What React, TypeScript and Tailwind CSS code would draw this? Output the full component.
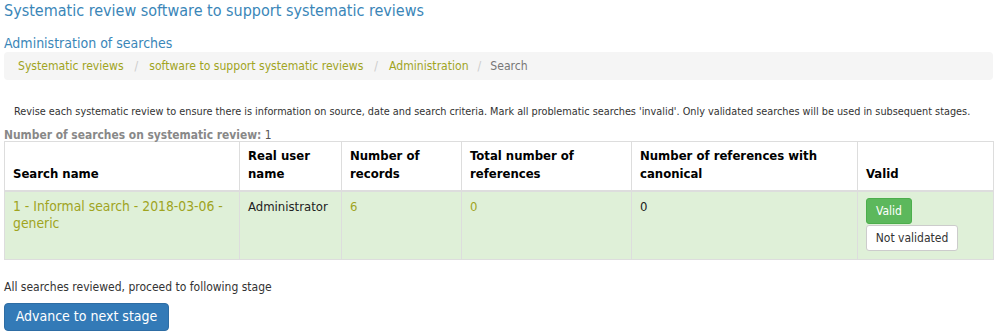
import React from "react";

const font = { fontFamily: '"DejaVu Sans Condensed", "Liberation Sans", sans-serif' };

export default function App() {
  const th = "border border-[#dddddd] border-b-2 align-bottom px-[8px] pb-[7px] text-left text-[13px] leading-[18px] font-bold text-black";
  const td = "border border-[#dddddd] align-top px-[8px] pt-[6px] text-[13px] leading-[17px]";
  return (
    <div className="bg-white w-[1000px] h-[335px] px-[4px] overflow-hidden" style={font}>
      <h1 className="text-[16px] leading-[22px] text-[#3a86b8] font-normal">
        Systematic review software to support systematic reviews
      </h1>
      <h2 className="mt-[12px] text-[14px] leading-[18px] text-[#3a86b8] font-normal">
        Administration of searches
      </h2>
      <div className="w-[989px] h-[28px] bg-[#f5f5f5] rounded-[4px] pl-[14px] flex items-center text-[12.1px]">
        <span className="text-[#a0a41e]">Systematic reviews</span>
        <span className="text-[#cccccc] px-[11px]">/</span>
        <span className="text-[#a0a41e]">software to support systematic reviews</span>
        <span className="text-[#cccccc] px-[11px]">/</span>
        <span className="text-[#a0a41e]">Administration</span>
        <span className="text-[#cccccc] px-[9px]">/</span>
        <span className="text-[#777777]">Search</span>
      </div>
      <p className="mt-[23px] pl-[10px] text-[10.8px] leading-[18px] text-[#333333] whitespace-nowrap">
        Revise each systematic review to ensure there is information on source, date and search criteria. Mark all problematic searches 'invalid'. Only validated searches will be used in subsequent stages.
      </p>
      <p className="mt-[8px] text-[11.9px] leading-[12px] text-[#888888]">
        <span className="font-bold">Number of searches on systematic review:</span>{" "}
        <span className="text-[#555555]">1</span>
      </p>
      <table className="border-collapse w-[989px] table-fixed">
        <colgroup>
          <col className="w-[235px]" />
          <col className="w-[102px]" />
          <col className="w-[120px]" />
          <col className="w-[170px]" />
          <col className="w-[226px]" />
          <col className="w-[136px]" />
        </colgroup>
        <thead>
          <tr className="h-[49px]">
            <th className={th}>Search name</th>
            <th className={th}>Real user name</th>
            <th className={th}>Number of records</th>
            <th className={th}>Total number of references</th>
            <th className={th}>Number of references with canonical</th>
            <th className={th}>Valid</th>
          </tr>
        </thead>
        <tbody>
          <tr className="bg-[#dff0d8] h-[67px]">
            <td className={td + " text-[#a0a41e]"}>
              <span className="text-[13.8px]">1 - Informal search - 2018-03-06 - generic</span>
            </td>
            <td className={td + " text-[#222222]"}>Administrator</td>
            <td className={td + " text-[#a0a41e]"}>6</td>
            <td className={td + " text-[#a0a41e]"}>0</td>
            <td className={td + " text-[#222222]"}>0</td>
            <td className="border border-[#dddddd] align-top px-[8px] pt-[6px] pb-[8px]">
              <div className="flex flex-col items-start">
                <button className="h-[26px] w-[46px] rounded-[3px] bg-[#5cb85c] border border-[#4cae4c] text-white text-[12px] flex items-center justify-center">
                  Valid
                </button>
                <button className="mt-[1px] h-[26px] w-[92px] rounded-[3px] bg-white border border-[#cccccc] text-[#333333] text-[12px] flex items-center justify-center">
                  Not validated
                </button>
              </div>
            </td>
          </tr>
        </tbody>
      </table>
      <p className="mt-[19px] text-[12px] leading-[16px] text-[#333333]">
        All searches reviewed, proceed to following stage
      </p>
      <button className="mt-[8px] h-[28px] w-[165px] rounded-[4px] bg-[#337ab7] border border-[#2e6da4] text-white text-[14px] flex items-center justify-center">
        Advance to next stage
      </button>
    </div>
  );
}
